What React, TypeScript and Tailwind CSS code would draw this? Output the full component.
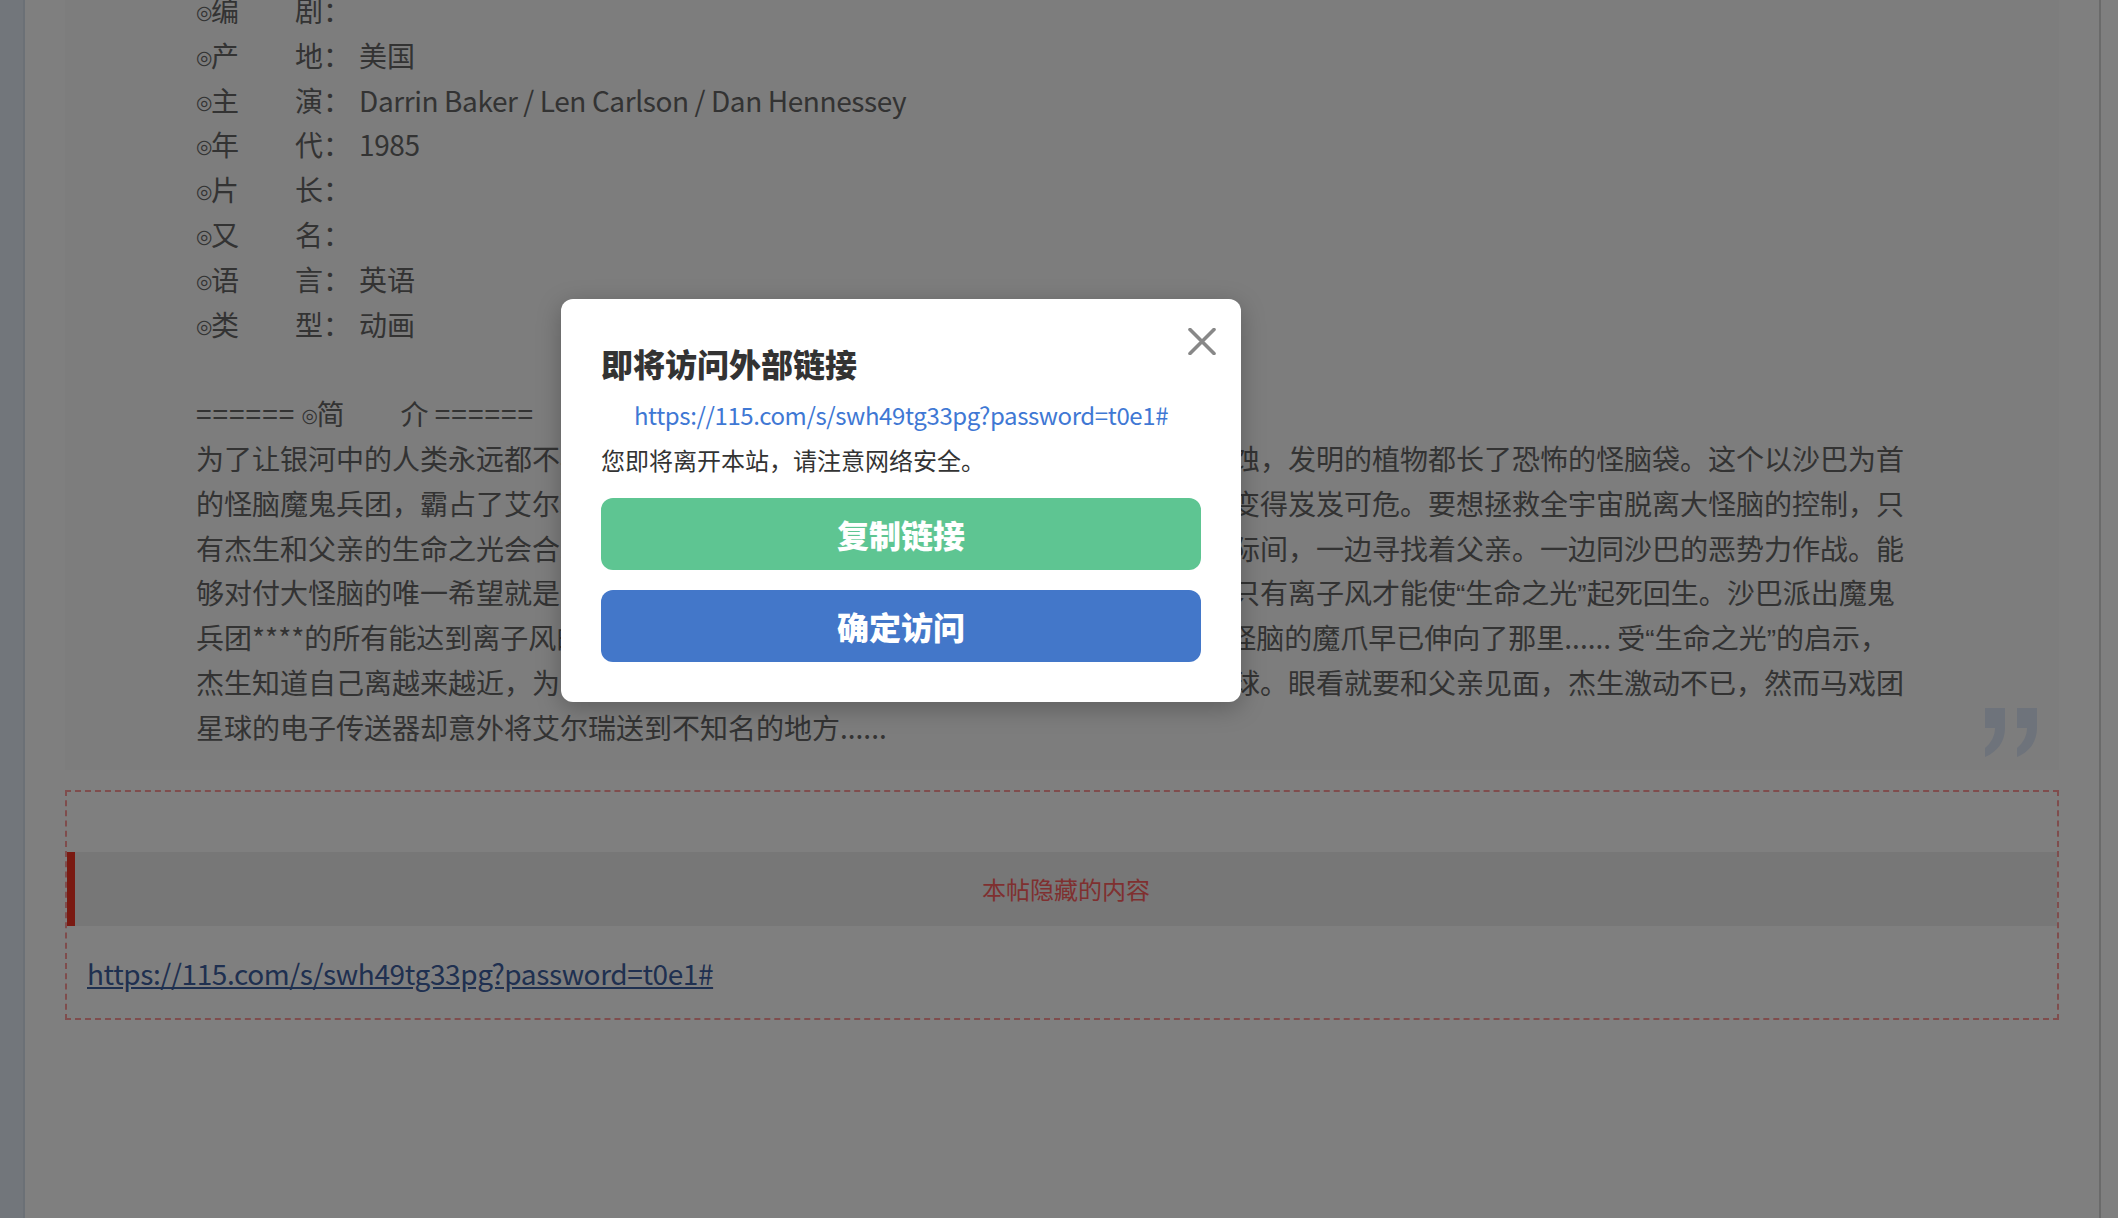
import React from 'react';

const infoRows: { label: string; value: string; latin?: boolean }[] = [
  { label: '编　　剧：', value: '' },
  { label: '产　　地：', value: '美国' },
  { label: '主　　演：', value: 'Darrin Baker / Len Carlson / Dan Hennessey', latin: true },
  { label: '年　　代：', value: '1985', latin: true },
  { label: '片　　长：', value: '' },
  { label: '又　　名：', value: '' },
  { label: '语　　言：', value: '英语' },
  { label: '类　　型：', value: '动画' },
];

// “ and ” are marked with | so they can be drawn narrow, like the reference
const synopsis = [
  '为了让银河中的人类永远都不再挨饿，艾尔瑞博士培育了新的植物，却遭宇宙射线侵蚀，发明的植物都长了恐怖的怪脑袋。这个以沙巴为首',
  '的怪脑魔鬼兵团，霸占了艾尔瑞的实验室，并向整个银河系扩张，宇宙的和平从此也变得岌岌可危。要想拯救全宇宙脱离大怪脑的控制，只',
  '有杰生和父亲的生命之光会合才能彻底打败怪脑。于是杰生率领闪电骑士们穿梭于星际间，一边寻找着父亲。一边同沙巴的恶势力作战。能',
  '够对付大怪脑的唯一希望就是生命之光的种子，可是种子已经枯萎，科学家们发现，只有离子风才能使|“|生命之光|”|起死回生。沙巴派出魔鬼',
  '兵团****的所有能达到离子风的地方，杰生在艾尔瑞的指引下找到了离子风，可是大怪脑的魔爪早已伸向了那里...... 受|“|生命之光|”|的启示，',
  '杰生知道自己离越来越近，为了救出父亲，他和骑士们一路冲锋追踪来到了马戏团星球。眼看就要和父亲见面，杰生激动不已，然而马戏团',
  '星球的电子传送器却意外将艾尔瑞送到不知名的地方......',
];

const LINK = 'https://115.com/s/swh49tg33pg?password=t0e1#';

const Bullet = () => (
  <span className="inline-block w-[15px] font-['DejaVu_Sans'] text-[19px] leading-none align-[3px]">◎</span>
);

const Line = ({ text }: { text: string }) => (
  <div className="h-[44.8px] whitespace-nowrap">
    {text.split('|').map((part, i) =>
      part === '“' || part === '”'
        ? <span key={i} className="font-['Liberation_Sans'] leading-none">{part}</span>
        : <React.Fragment key={i}>{part}</React.Fragment>
    )}
  </div>
);

const QuoteMark = () => (
  <svg width="52" height="49" viewBox="0 0 52 49" className="absolute right-[22px] bottom-[13px]">
    <path d="M0 0H20V20C20 34 12 44 0 49V40C6 35 10 28 10 20H0Z" fill="#dce6f6" />
    <path d="M32 0H52V20C52 34 44 44 32 49V40C38 35 42 28 42 20H32Z" fill="#dce6f6" />
  </svg>
);

export default function App() {
  return (
    <div className="relative flex h-[1218px] w-full overflow-hidden bg-white font-['Noto_Sans_CJK_SC',sans-serif]">
      {/* left rail */}
      <div className="w-[25px] shrink-0 border-r-2 border-[#d6e0ec] bg-[#e4ecf6]" />

      {/* main column */}
      <div className="w-[2074px] shrink-0 px-[40px]">
        <div className="relative mt-[-12px] bg-[#fafafa] pl-[131px] pb-[20px] text-[28px] leading-[44.8px] text-[#666]">
          {infoRows.map(r => (
            <div key={r.label} className="h-[44.8px] whitespace-nowrap">
              <Bullet />{r.label}
              {r.value && <span className={r.latin ? 'ml-[8px] tracking-[-0.4px]' : 'ml-[8px]'}>{r.value}</span>}
            </div>
          ))}
          <div>&nbsp;</div>
          <div className="h-[44.8px] whitespace-nowrap">
            <span className="tracking-[1px]">======</span> <Bullet />简　　介 <span className="tracking-[1px]">======</span>
          </div>
          {synopsis.map((l, i) => <Line key={i} text={l} />)}
          <QuoteMark />
        </div>

        {/* hidden content box */}
        <div className="mt-[20px] border-2 border-dashed border-[#ff9a9a] pt-[60px] pb-[23px]">
          <div className="flex h-[74px] items-center justify-center border-l-[8px] border-[#f53425] bg-[#eeeeee] text-[24px] text-[#ff6060]">
            本帖隐藏的内容
          </div>
          <div className="mt-[25px] px-[20px] text-[28px] leading-[44.8px]">
            <a className="tracking-[-0.4px] text-[#3e60a0] underline">{LINK}</a>
          </div>
        </div>
      </div>

      <div className="w-[2px] shrink-0 bg-[#d4d4d4]" />
      <div className="flex-1" />

      {/* overlay */}
      <div className="absolute inset-0 bg-black/50" />

      {/* dialog */}
      <div className="absolute left-[561px] top-[299px] w-[680px] rounded-[12px] bg-white px-[40px] pt-[40px] pb-[40px] shadow-[0_6px_24px_rgba(0,0,0,0.25)]">
        <button className="absolute right-[25px] top-[29px]">
          <svg width="28" height="27" viewBox="0 0 28 27">
            <path d="M2 1.5L26 25.5M26 1.5L2 25.5" stroke="#888" strokeWidth="3.6" strokeLinecap="round" />
          </svg>
        </button>
        <div className="text-[32px] font-black leading-[48px] text-[#333]">即将访问外部链接</div>
        <div className="mt-[10px] text-center text-[24px] leading-[36px] tracking-[-0.4px] text-[#3f78d4]">{LINK}</div>
        <div className="mt-[9px] text-[24px] leading-[36px] text-[#333]">您即将离开本站，请注意网络安全。</div>
        <button className="mt-[20px] flex h-[72px] w-full items-center justify-center rounded-[12px] bg-[#5ec592] text-[32px] font-black text-white">
          复制链接
        </button>
        <button className="mt-[20px] flex h-[72px] w-full items-center justify-center rounded-[12px] bg-[#4377c9] text-[32px] font-black text-white">
          确定访问
        </button>
      </div>
    </div>
  );
}
